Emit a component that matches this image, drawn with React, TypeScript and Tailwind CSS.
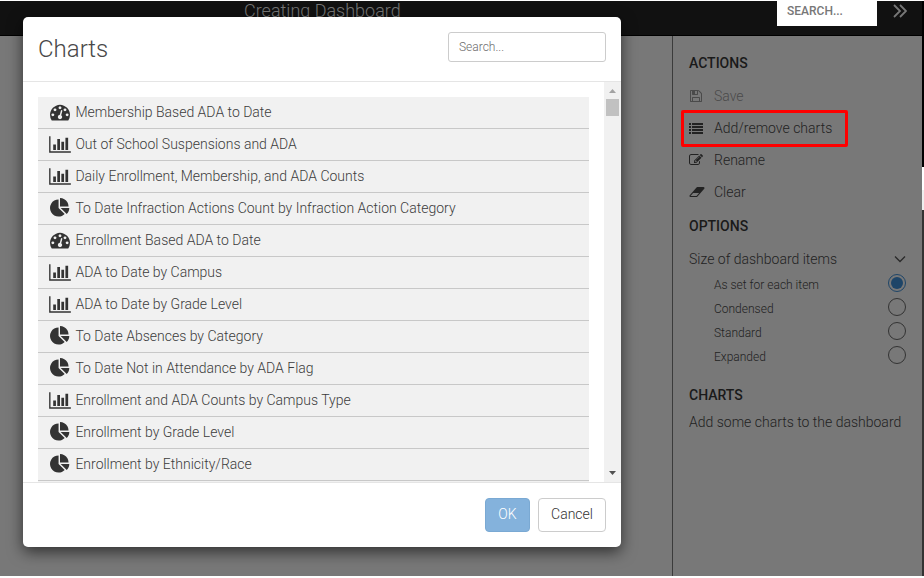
import React from "react";

type IconName = "gauge" | "bar" | "pie" | "save" | "list" | "edit" | "eraser";

const ICONS: Record<IconName, { box: string; d: string }> = {
  gauge: {
    box: "0 0 1792 1792",
    d: "M384 1152q0-53-37.5-90.5t-90.5-37.5-90.5 37.5-37.5 90.5 37.5 90.5 90.5 37.5 90.5-37.5 37.5-90.5zm192-448q0-53-37.5-90.5t-90.5-37.5-90.5 37.5-37.5 90.5 37.5 90.5 90.5 37.5 90.5-37.5 37.5-90.5zm428 481l101-382q6-26-7.5-48.5t-38.5-29.5-48 6.5-30 39.5l-101 382q-60 5-107 43.5t-63 98.5q-20 77 20 146t117 89 146-20 89-117q16-60-6-117t-72-91zm660-33q0-53-37.5-90.5t-90.5-37.5-90.5 37.5-37.5 90.5 37.5 90.5 90.5 37.5 90.5-37.5 37.5-90.5zm-640-640q0-53-37.5-90.5t-90.5-37.5-90.5 37.5-37.5 90.5 37.5 90.5 90.5 37.5 90.5-37.5 37.5-90.5zm448 192q0-53-37.5-90.5t-90.5-37.5-90.5 37.5-37.5 90.5 37.5 90.5 90.5 37.5 90.5-37.5 37.5-90.5zm320 448q0 261-141 483-19 29-54 29h-1402q-35 0-54-29-141-221-141-483 0-182 71-348t191-286 286-191 348-71 348 71 286 191 191 286 71 348z",
  },
  bar: {
    box: "0 0 2048 1792",
    d: "M640 896v512h-256v-512h256zm384-512v1024h-256v-1024h256zm1024 1152v128h-2048v-1536h128v1408h1920zm-640-896v768h-256v-768h256zm384-384v1152h-256v-1152h256z",
  },
  pie: {
    box: "0 0 1792 1792",
    d: "M768 890l546 546q-106 108-247.5 168t-298.5 60q-209 0-385.5-103t-279.5-279.5-103-385.5 103-385.5 279.5-279.5 385.5-103v762zm187 6h773q0 157-60 298.5t-168 247.5zm709-128h-768v-768q209 0 385.5 103t279.5 279.5 103 385.5z",
  },
  save: {
    box: "0 0 1792 1792",
    d: "M512 1536h768v-384h-768v384zm896 0h128v-896q0-14-10-38.5t-20-34.5l-281-281q-10-10-34-20t-39-10v416q0 40-28 68t-68 28h-576q-40 0-68-28t-28-68v-416h-128v1280h128v-416q0-40 28-68t68-28h832q40 0 68 28t28 68v416zm-384-928v-320q0-13-9.5-22.5t-22.5-9.5h-192q-13 0-22.5 9.5t-9.5 22.5v320q0 13 9.5 22.5t22.5 9.5h192q13 0 22.5-9.5t9.5-22.5zm640 32v928q0 40-28 68t-68 28h-1344q-40 0-68-28t-28-68v-1344q0-40 28-68t68-28h928q40 0 88 20t76 48l280 280q28 28 48 76t20 88z",
  },
  list: {
    box: "0 0 1792 1792",
    d: "M0 1408h256v256h-256zM0 1024h256v256h-256zM0 640h256v256h-256zM0 256h256v256h-256zM384 1408h1408v256h-1408zM384 1024h1408v256h-1408zM384 640h1408v256h-1408zM384 256h1408v256h-1408z",
  },
  edit: {
    box: "0 0 1792 1792",
    d: "M888 1184l116-116-152-152-116 116v56h96v96h56zm440-720q-16-16-33 1l-350 350q-17 17-1 33t33-1l350-350q17-17 1-33zm80 594v190q0 119-84.5 203.5t-203.5 84.5h-832q-119 0-203.5-84.5t-84.5-203.5v-832q0-119 84.5-203.5t203.5-84.5h832q63 0 117 25 15 7 18 23 3 17-9 29l-49 49q-14 14-32 8-23-6-45-6h-832q-66 0-113 47t-47 113v832q0 66 47 113t113 47h832q66 0 113-47t47-113v-126q0-13 9-22l64-64q15-15 35-7t20 29zm-96-738l288 288-672 672h-288v-288zm444 132l-92 92-288-288 92-92q28-28 68-28t68 28l152 152q28 28 28 68t-28 68z",
  },
  eraser: {
    box: "0 0 2048 1792",
    d: "M960 1408l336-384h-768l-336 384h768zm1013-1077q15 34 9.5 71.5t-30.5 65.5l-896 1024q-38 44-96 44h-768q-38 0-69.5-20.5t-47.5-54.5q-15-34-9.5-71.5t30.5-65.5l896-1024q38-44 96-44h768q38 0 69.5 20.5t47.5 54.5z",
  },
};

const LIST_ICON_SIZE: Partial<Record<IconName, string>> = {
  bar: "h-[19px] w-[22px]",
  gauge: "mt-[-2px] ml-px h-[20px] w-[20px]",
  pie: "mt-[-1px] ml-px h-[20px] w-[20px]",
};

function Icon({ name, className }: { name: IconName; className: string }) {
  const { box, d } = ICONS[name];
  return (
    <svg viewBox={box} className={className} fill="currentColor" aria-hidden="true">
      <path d={d} />
    </svg>
  );
}

const CHARTS: { icon: IconName; label: string }[] = [
  { icon: "gauge", label: "Membership Based ADA to Date" },
  { icon: "bar", label: "Out of School Suspensions and ADA" },
  { icon: "bar", label: "Daily Enrollment, Membership, and ADA Counts" },
  { icon: "pie", label: "To Date Infraction Actions Count by Infraction Action Category" },
  { icon: "gauge", label: "Enrollment Based ADA to Date" },
  { icon: "bar", label: "ADA to Date by Campus" },
  { icon: "bar", label: "ADA to Date by Grade Level" },
  { icon: "pie", label: "To Date Absences by Category" },
  { icon: "pie", label: "To Date Not in Attendance by ADA Flag" },
  { icon: "bar", label: "Enrollment and ADA Counts by Campus Type" },
  { icon: "pie", label: "Enrollment by Grade Level" },
  { icon: "pie", label: "Enrollment by Ethnicity/Race" },
];

const SIZES = ["As set for each item", "Condensed", "Standard", "Expanded"];

function Action({ icon, label, muted }: { icon: IconName; label: string; muted?: boolean }) {
  return (
    <div className={muted ? "flex h-8 items-center text-[#4a4a4a]" : "flex h-8 items-center text-[#222]"}>
      <span className="flex w-[25px] items-center">
        <Icon name={icon} className={icon === "eraser" ? "h-[14px] w-[16px]" : "h-[14px] w-[14px]"} />
      </span>
      <span>{label}</span>
    </div>
  );
}

function Sidebar() {
  return (
    <aside className="flex w-[250px] flex-col border-l border-[#3b3b3b] pr-4 pl-4 text-[14px] text-[#222]">
      <h2 className="mt-[17px] h-5 text-[14px] leading-5 font-medium text-[#1a1a1a]">ACTIONS</h2>
      <div className="mt-[7px] flex flex-col">
        <Action icon="save" label="Save" muted />
        <Action icon="list" label="Add/remove charts" />
        <Action icon="edit" label="Rename" />
        <Action icon="eraser" label="Clear" />
      </div>
      <h2 className="mt-2 h-5 text-[14px] leading-5 font-medium text-[#1a1a1a]">OPTIONS</h2>
      <div className="mt-[13px] flex h-5 items-center justify-between">
        <span>Size of dashboard items</span>
        <svg viewBox="0 0 12 8" className="h-2 w-3" fill="none" stroke="#2a2a2a" strokeWidth="1.3">
          <path d="M1 1.5L6 6.5L11 1.5" />
        </svg>
      </div>
      <div className="mt-[2px] flex flex-col pl-[25px] text-[12px]">
        {SIZES.map((size, i) => (
          <div key={size} className="flex h-6 items-center justify-between">
            <span className="pt-[3px]">{size}</span>
            <span
              className={
                i === 0
                  ? "flex size-[18px] items-center justify-center rounded-full border border-[#1e4568]"
                  : "flex size-[18px] rounded-full border border-[#333]"
              }
            >
              {i === 0 && <span className="size-3 rounded-full bg-[#1e4568]" />}
            </span>
          </div>
        ))}
      </div>
      <h2 className="mt-[18px] h-5 text-[14px] leading-5 font-medium text-[#1a1a1a]">CHARTS</h2>
      <p className="mt-[7px] leading-5 whitespace-nowrap">Add some charts to the dashboard</p>
    </aside>
  );
}

function ChartsDialog() {
  return (
    <div className="absolute top-[17px] left-[23px] flex h-[530px] w-[598px] flex-col rounded-[5px] bg-white text-[14px] text-[#333] shadow-[0_5px_15px_rgba(0,0,0,0.6)]">
      <header className="flex h-[65px] items-center justify-between border-b border-[#e5e5e5] px-[15px]">
        <h1 className="text-[24px] leading-8 font-light text-[#484848]">Charts</h1>
        <div className="mt-[-4px] flex h-[30px] w-[158px] items-center rounded-[3px] border border-[#ccc] px-[10px] text-[12px] text-[#6c6c6c]">
          Search...
        </div>
      </header>
      <div className="flex h-[400px] overflow-hidden">
        <ul className="mt-[15px] ml-[15px] w-[551px] bg-[#f1f1f1]">
          {CHARTS.map(({ icon, label }) => (
            <li key={label} className="flex h-8 items-center border-b border-[#c8c8c8] pl-[11px]">
              <span className="flex w-[26.4px] items-center">
                <Icon name={icon} className={LIST_ICON_SIZE[icon] ?? "size-5"} />
              </span>
              <span className="text-[#3c3c3c]">{label}</span>
            </li>
          ))}
        </ul>
        <div className="ml-auto flex w-[17px] flex-col items-center bg-[#f1f1f1]">
          <svg viewBox="0 0 7 4" className="mt-[7px] h-1 w-[7px]" fill="#a3a3a3">
            <path d="M0 4L3.5 0L7 4z" />
          </svg>
          <div className="mt-[6px] h-[17px] w-[13px] bg-[#c1c1c1]" />
          <svg viewBox="0 0 7 4" className="mt-auto mb-[7px] h-1 w-[7px]" fill="#505050">
            <path d="M0 0L3.5 4L7 0z" />
          </svg>
        </div>
      </div>
      <footer className="flex flex-1 justify-end gap-2 border-t border-[#e5e5e5] px-[15px] pt-[15px]">
        <button className="h-[34px] w-[45px] rounded-[4px] border border-[#7aa9d3] bg-[#84b2dc] pb-[2px] font-light text-white">OK</button>
        <button className="h-[34px] w-[68px] rounded-[4px] border border-[#ccc] bg-white pb-[2px] font-light">Cancel</button>
      </footer>
    </div>
  );
}

export default function App() {
  return (
    <div className="relative flex h-[578px] w-[924px] overflow-hidden bg-white pt-px pb-[2px] font-['Roboto','Liberation_Sans',sans-serif] font-light">
      <div className="flex w-[922px] flex-col bg-[#787878]">
        <header className="flex h-[35px] shrink-0 items-start border-b border-black bg-[#111]">
          <div className="ml-[244px] text-[18px] leading-[20px] text-[#777]">Creating Dashboard</div>
          <div className="ml-auto flex h-[25px] w-[100px] items-center bg-white pb-[5px] pl-[10px] text-[12px] font-medium text-[#777]">
            SEARCH...
          </div>
          <svg viewBox="0 0 14 14" className="mt-[3px] mr-[15px] ml-4 size-[14px]" fill="none" stroke="#777" strokeWidth="1.8">
            <path d="M1 1L7 7L1 13M7 1L13 7L7 13" />
          </svg>
        </header>
        <main className="flex flex-1 justify-end">
          <Sidebar />
        </main>
      </div>
      <div className="flex w-[2px] flex-col">
        <div className="h-[166px] bg-black" />
        <div className="h-[23px] bg-white" />
        <div className="h-[20px] bg-[#eee]" />
        <div className="flex-1 bg-[#333]" />
      </div>
      <ChartsDialog />
      <div className="absolute top-[110px] left-[681px] h-[37px] w-[167px] rounded-[2px] border-[3px] border-[#f00]" />
    </div>
  );
}
